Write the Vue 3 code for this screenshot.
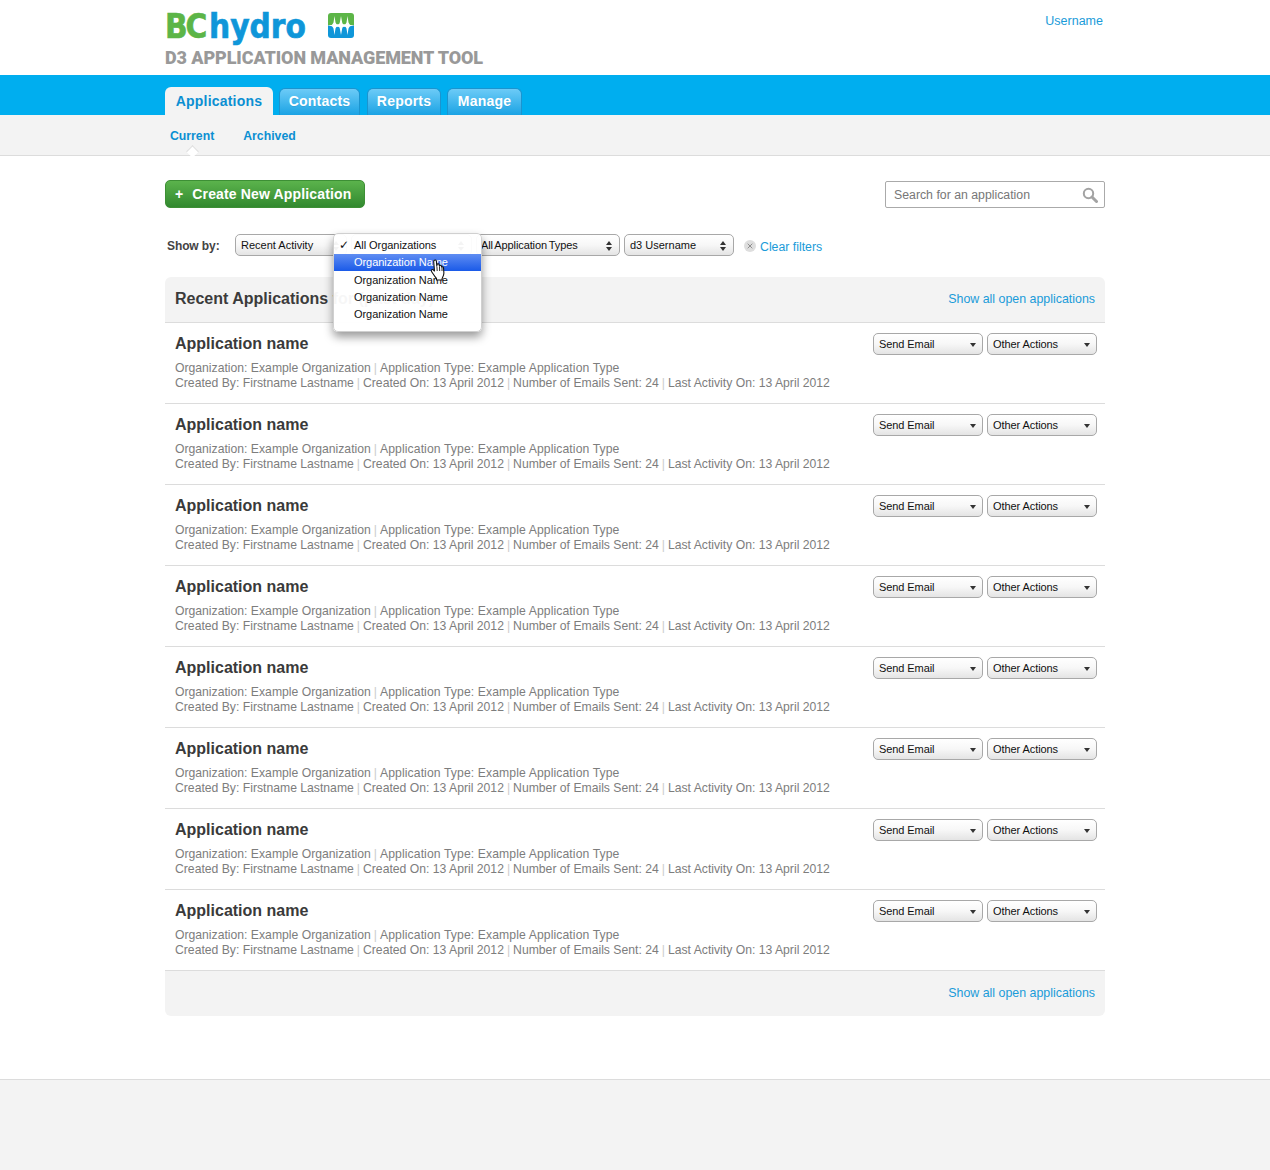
<script setup>
const tabs = ['Contacts', 'Reports', 'Manage']
const apps = Array.from({ length: 8 }, (_, i) => i)
</script>

<template>
  <div class="page">
    <header class="top">
      <div class="wrap top-in">
        <div>
          <div class="logo">
            <span class="bc">BC</span><span class="hydro">hydro</span>
            <svg class="mark" width="26" height="25" viewBox="0 0 26 25">
              <path d="M3 0H23a3 3 0 0 1 3 3V12.500H0V3a3 3 0 0 1 3-3z" fill="#5cb547" />
              <path d="M0 12.500H26V22a3 3 0 0 1-3 3H3a3 3 0 0 1-3-3z" fill="#0f96d9" />
              <path d="M0 12.500Q13 9.500 26 12.500Q13 15.500 0 12.500z" fill="#fff" />
              <path d="M13 3l1.200 6.500 1.300 3-1.300 3-1.200 6.500-1.200-6.500-1.300-3 1.300-3z" fill="#fff" />
              <path d="M6.500 3l1 6.500 1.800 3-1.800 3-1 6.500-1-6.500-1.800-3 1.800-3zM19.500 3l1 6.500 1.800 3-1.800 3-1 6.500-1-6.500-1.800-3 1.800-3z" fill="#fff" />
            </svg>
          </div>
          <div class="tool">D3 APPLICATION MANAGEMENT TOOL</div>
        </div>
        <a class="user">Username</a>
      </div>
    </header>

    <nav class="bluebar">
      <div class="wrap tabs">
        <a class="tab active">Applications</a>
        <a v-for="t in tabs" :key="t" class="tab" :class="'t-' + t">{{ t }}</a>
      </div>
    </nav>

    <div class="subnav">
      <div class="wrap subs">
        <a class="sub cur">Current</a>
        <a class="sub">Archived</a>
      </div>
    </div>

    <main class="wrap main">
      <div class="actions">
        <button class="create"><span class="plus">+</span>Create New Application</button>
        <div class="search">
          <span>Search for an application</span>
          <svg width="16" height="16" viewBox="0 0 16 16" fill="none" stroke="#a3a3a3">
            <circle cx="6.500" cy="6.500" r="4.700" stroke-width="2" />
            <path d="M10 10l4.500 4.500" stroke-width="3" stroke-linecap="round" />
          </svg>
        </div>
      </div>

      <div class="filters">
        <span class="showby">Show by:</span>
        <div class="sel s1">Recent Activity<i class="updown"></i></div>
        <div class="sel s2"><i class="updown"></i></div>
        <div class="sel s3">All Application Types<i class="updown"></i></div>
        <div class="sel s4">d3 Username<i class="updown"></i></div>
        <svg class="x" width="12" height="12" viewBox="0 0 12 12">
          <circle cx="6" cy="6" r="6" fill="#dedede" />
          <path d="M3.700 3.700l4.600 4.600M8.300 3.700L3.700 8.300" stroke="#8f8f8f" />
        </svg>
        <a class="clear">Clear filters</a>
        <div class="popup">
          <div class="opt"><span class="check">✓</span>All Organizations</div>
          <div class="opt hi">Organization Name</div>
          <div class="opt o3">Organization Name</div>
          <div class="opt">Organization Name</div>
          <div class="opt">Organization Name</div>
          <svg class="hand" width="16" height="22" viewBox="0 0 16 22">
            <path d="M4 1.500c1-.9 2.200-.4 2.400.7L6.800 7l.3-1.500c.4-1 1.800-.9 2 .1l.3 1.400c.3-1 1.700-1 2 0l.3 1.200c.5-.7 1.700-.4 1.800.6l.4 5.200c0 2.500-1 4-1.800 5.500V21H6.500v-1.500C5 18 3.500 15.500 1.500 12.500.7 11.300 2 10 3.200 10.800l1.300 1.200L3.700 2.800c0-.5 0-1 .3-1.300z" fill="#fff" stroke="#111" stroke-width="1.100" stroke-linejoin="round" />
            <path d="M6.900 7.500l.3 4.500M9.500 7.500l.2 4.500M12 8.500v3.500" stroke="#111" stroke-width=".9" fill="none" />
          </svg>
        </div>
      </div>

      <section class="panel">
        <div class="head">
          <h2>Recent Applications <span class="faint">for (past day)</span></h2>
          <a class="all">Show all open applications</a>
        </div>
        <article v-for="a in apps" :key="a" class="row">
          <div>
            <h3>Application name</h3>
            <p class="meta">
              Organization: Example Organization<b>|</b><span class="wide">Application Type: Example Application Type</span><br />
              Created By: Firstname Lastname<b>|</b>Created On: 13 April 2012<b>|</b>Number of Emails Sent: 24<b>|</b>Last Activity On: 13 April 2012
            </p>
          </div>
          <div class="btns">
            <div class="btn">Send Email<i class="down"></i></div>
            <div class="btn">Other Actions<i class="down"></i></div>
          </div>
        </article>
        <div class="foot"><a class="all">Show all open applications</a></div>
      </section>
    </main>

    <footer class="pagefoot"></footer>
  </div>
</template>

<style>
html, body { margin: 0; background: #fff; }
</style>

<style scoped>
.page { font-family: "Liberation Sans", Arial, sans-serif; color: #333; min-height: 1170px; }
.wrap { width: 940px; margin: 0 auto; }
a { color: #0b96d8; }
.top { height: 75px; }
.top-in { display: flex; justify-content: space-between; box-sizing: border-box; padding-right: 2px; }
.logo { height: 49px; display: flex; align-items: flex-start; padding-top: 8px; box-sizing: border-box; }
.bc, .hydro { font-family: "DejaVu Sans Condensed", "DejaVu Sans", sans-serif; font-weight: 700; line-height: 38px; font-size: 33px; -webkit-text-stroke: .6px currentColor; }
.bc { color: #5cb547; letter-spacing: -2.200px; width: 44px; }
.hydro { color: #0f96d9; letter-spacing: 0; width: 119px; }
.mark { margin-top: 5px; }
.tool { font-family: Roboto, sans-serif; font-weight: 900; font-size: 18px; line-height: 18px; color: #999; letter-spacing: -.1px; white-space: nowrap; }
.user { font-size: 12.500px; margin-top: 14px; color: #1a9bd9; }
.bluebar { height: 40px; background: #00aeef; }
.tabs { display: flex; height: 40px; align-items: flex-end; gap: 6px; }
.tab { box-sizing: border-box; height: 27px; line-height: 25px; text-align: center; font-weight: 700; font-size: 14px; letter-spacing: .2px; color: #fff; border: 1px solid #1b94cf; border-bottom: 0; border-radius: 6px 6px 0 0; background: linear-gradient(#6ccbf7, #1ba3e4); width: 81px; text-shadow: 0 1px 0 rgba(0,0,0,.08); }
.active { width: 108px; height: 28px; background: #f3f3f3; border: 0; color: #0b8fd2; line-height: 28px; text-shadow: none; }
.t-Reports { width: 74px; margin-left: 1px; }
.t-Manage { width: 75px; }
.subnav { height: 41px; box-sizing: border-box; background: #f3f3f3; border-bottom: 1px solid #dcdcdc; }
.subs { display: flex; gap: 29px; padding: 2px 0 0 5px; box-sizing: border-box; height: 40px; align-items: center; }
.sub { position: relative; font-size: 12.250px; font-weight: 700; color: #0b8fd2; }
.cur::after { content: ""; position: absolute; left: 18px; top: 18px; width: 8px; height: 8px; background: #fff; border-left: 1px solid #dcdcdc; border-top: 1px solid #dcdcdc; transform: rotate(45deg); }
.main { padding-top: 24px; }
.actions { display: flex; justify-content: space-between; align-items: flex-start; height: 28px; }
.create { box-sizing: border-box; width: 200px; height: 28px; padding: 0 0 0 9px; text-align: left; border: 1px solid #3d8f35; border-radius: 5px; background: linear-gradient(#5bb34c, #32892f); color: #fff; font: 700 14px/26px "Liberation Sans", Arial, sans-serif; letter-spacing: .15px; }
.plus { margin-right: 9px; }
.search { box-sizing: border-box; width: 220px; height: 27px; margin-top: 1px; border: 1px solid #aaa; border-radius: 2px; display: flex; align-items: center; justify-content: space-between; padding: 0 6px 0 8px; font-size: 12.300px; color: #777; background: #fff; }
.filters { position: relative; display: flex; align-items: center; height: 24px; margin-top: 25px; }
.showby { position: relative; top: 1px; width: 70px; padding-left: 2px; box-sizing: border-box; font-size: 12px; letter-spacing: -.1px; font-weight: 700; color: #444; }
.sel, .btn { position: relative; box-sizing: border-box; height: 22px; line-height: 20px; border: 1px solid #a8a8a8; border-radius: 5px; background: linear-gradient(#fff 0%, #f7f7f7 50%, #e4e4e4 100%); padding-left: 5px; font-size: 11px; color: #111; white-space: nowrap; }
.btn { letter-spacing: -.08px; }
.s1 { width: 112px; margin-right: 4px; }
.s2 { width: 121px; margin-right: 4px; }
.s3 { width: 144px; margin-right: 4px; word-spacing: -1px; letter-spacing: -.1px; padding-left: 4px; }
.s4 { width: 110px; margin-right: 10px; }
.updown { position: absolute; right: 7px; top: 6px; width: 0; height: 0; border: 3px solid transparent; border-bottom: 4px solid #333; border-top: 0; }
.updown::after { content: ""; position: absolute; left: -3px; top: 6px; width: 0; height: 0; border: 3px solid transparent; border-top: 4px solid #333; border-bottom: 0; }
.clear { margin-left: 4px; font-size: 12.300px; color: #1a9bd9; position: relative; top: 2px; }
.x { position: relative; top: 1px; }
.popup { position: absolute; z-index: 5; left: 168px; top: 0; width: 149px; height: 99px; box-sizing: border-box; padding-top: 3px; background: rgba(255,255,255,.95); border: 1px solid #d0d0d0; border-radius: 5px; box-shadow: 0 5px 10px rgba(0,0,0,.4); font-size: 11px; letter-spacing: -.05px; color: #111; }
.opt { position: relative; height: 17px; line-height: 17px; padding-left: 20px; }
.check { position: absolute; left: 5px; top: 0; font: 700 12px/17px "DejaVu Sans", sans-serif; }
.hi { background: linear-gradient(#5f8df2, #1a5ae8); color: #fff; }
.o3 { margin-top: 1px; }
.hand { position: absolute; left: 96px; top: 25px; }
.panel { margin-top: 20px; }
.head { box-sizing: border-box; height: 46px; display: flex; justify-content: space-between; align-items: center; padding: 0 10px 2px; background: #f3f3f3; border-radius: 6px 6px 0 0; border-bottom: 1px solid #dcdcdc; }
h2 { margin: 0; font-size: 16px; color: #3b3b3b; font-weight: 700; white-space: nowrap; }
.faint { color: #555; font-weight: 700; }
.all { font-size: 12.400px; color: #1a9bd9; }
.row { box-sizing: border-box; height: 81px; padding: 10px 8px 0 10px; border-bottom: 1px solid #dcdcdc; display: flex; justify-content: space-between; }
h3 { margin: 0; font-size: 16px; line-height: 21px; color: #3a3a3a; font-weight: 700; }
.meta { margin: 7px 0 0; font-size: 12.200px; line-height: 15px; color: #7d7d7d; white-space: nowrap; }
.meta b { font-weight: 400; color: #ccc; margin: 0 3px; }
.wide { letter-spacing: .1px; }
.btns { display: flex; gap: 4px; }
.btn { width: 110px; }
.down { position: absolute; right: 6px; top: 9px; width: 0; height: 0; border: 3px solid transparent; border-top: 4px solid #333; border-bottom: 0; }
.foot { box-sizing: border-box; height: 45px; display: flex; justify-content: flex-end; align-items: center; padding: 0 10px 2px; background: #f3f3f3; border-radius: 0 0 6px 6px; }
.pagefoot { box-sizing: border-box; height: 91px; margin-top: 63px; background: #f3f3f3; border-top: 1px solid #dcdcdc; }
</style>
